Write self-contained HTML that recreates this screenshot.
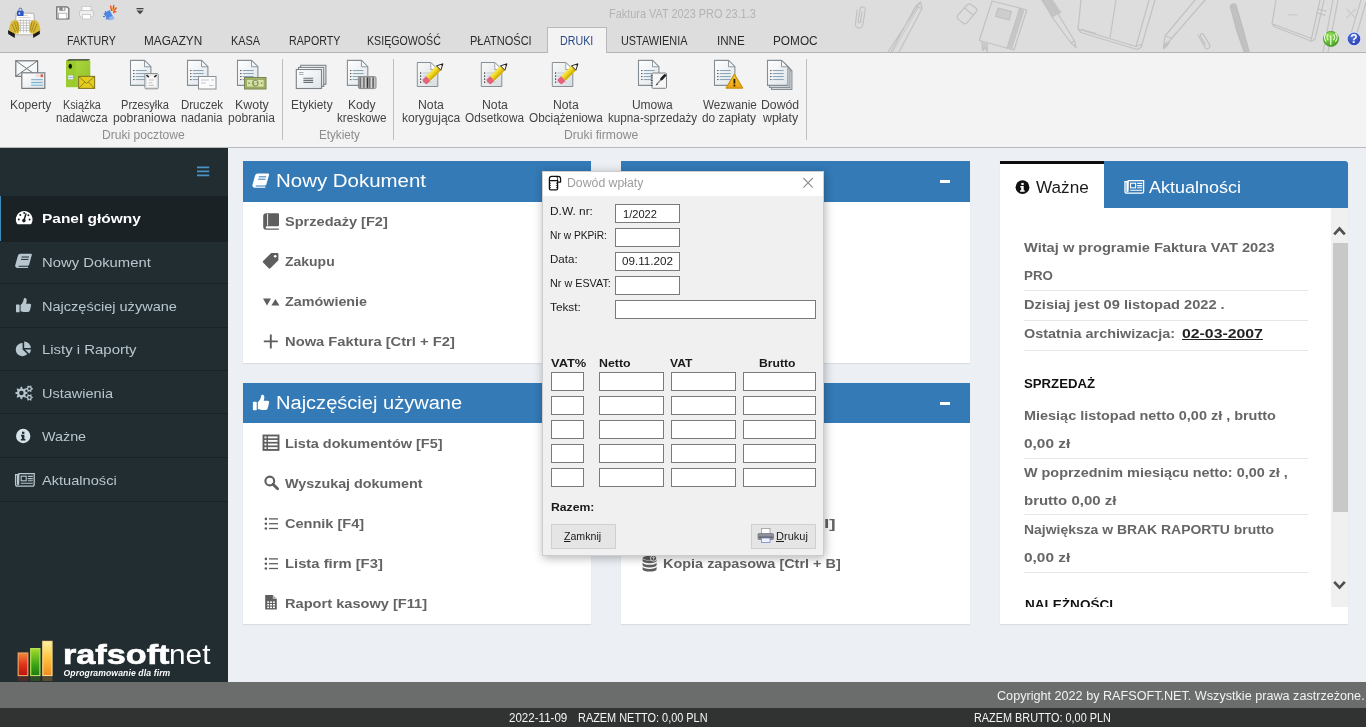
<!DOCTYPE html>
<html lang="pl"><head><meta charset="utf-8"><title>Faktura VAT 2023 PRO 23.1.3</title>
<style>
*{box-sizing:border-box;margin:0;padding:0}
html,body{width:1366px;height:727px;overflow:hidden;background:#ecf0f5;font-family:"Liberation Sans",sans-serif}
#w{position:absolute;left:0;top:0;width:1366px;height:727px;will-change:transform}
.a{position:absolute}
.t{position:absolute;white-space:nowrap;line-height:1;transform-origin:0 0}
svg.ov{position:absolute;left:0;top:0;width:1366px;height:727px;pointer-events:none}
.inp{position:absolute;background:#fff;border:1px solid #7a7a7a;height:19px}
.btn{position:absolute;height:25px;background:#e5e5e5;border:1px solid #cfcfcf;top:524px}
.sep{position:absolute;left:0;width:228px;height:1px;background:#1a2226}
.rsp{position:absolute;left:1024px;width:284px;height:1px;background:#e6e6e6}
.rs{position:absolute;top:58.5px;width:1px;height:81.5px;background:#bebebe}
</style></head>
<body><div id="w">
<div class="a" style="left:0;top:0;width:1366px;height:53px;background:#dddddd"></div><svg class="ov" viewBox="0 0 1366 727"><g fill="none" stroke="#c2c2c2" stroke-width="1.2" stroke-linecap="round" stroke-linejoin="round"><path d="M857,10 l-1.5,14 a3.6,3.6 0 0 0 7.2,1 l2.6,-15 a2.6,2.6 0 0 0 -5.2,-0.8 l-2,12 a1.2,1.2 0 0 0 2.4,0.4 l1.6,-9.5"/><path d="M920.5,2 l-32.5,50 M920.5,2 l1.5,6.5 l-23,43.5 M920.5,2 l-5,4.5 l-24.5,45.5 M915.5,6.5 l6.5,2"/><path d="M918.6,7 l-26,45" stroke-width="0.8"/><path d="M958,15 l9,-10 a3,3 0 0 1 4,-0.6 l4.5,3.4 a3,3 0 0 1 0.6,4.2 l-9,10.6 a3,3 0 0 1 -4.2,0.4 l-4.5,-3.6 a3,3 0 0 1 -0.4,-4.4z M964.5,8 l8.6,7"/><path d="M992,1 l34.8,9 l-12.8,40 l-34.700,-9.5z"/><path d="M1019.800,8.200 l5,1.3 l-12.8,40 l-5,-1.4z" fill="#c6c6c6" stroke="none"/><path d="M1019.800,8.200 l-12.800,39.9"/><path d="M998,8 l13.500,3.600 l-2.400,8.400 l-13.500,-3.600z" fill="#cdcdcd"/><path d="M982,42 l0.500,8.500 l2.500,-3 l2.300,4 l-0.300,-8.200" fill="#cacaca"/><path d="M1041,0 l12,0 l8,12 l-9,5z" fill="#c4c4c4" stroke="none"/><path d="M1043,0 l9,17 l19,26 l5,4.500 l-1.500,-6.500 l-17,-28 l-9,-13 M1052,17 l9,-5 M1071,43 l3.500,-2.200"/><path d="M1081,0 l-3,29 l3,3.500 l56,17 l4,-2 l14,-47.500 M1078,29 l58,17.500 l5,-2 M1136,46.500 l13,-46.500 M1116,0 l-6,37.500 M1096,33.500 l-14,-4"/><path d="M1205,0 l-33,38 l-8.500,10.500 l1.500,-12.500 l30,-36 M1165,36 l7,2 M1166.500,42 l3,1.500"/><path d="M1164.500,43 l-1,5.500 l4.500,-3.500z" fill="#c4c4c4"/><path d="M1198,35 l7,12.500 a2.600,2.600 0 0 0 4.600,-2.400 l-6,-10.500 a1.700,1.700 0 0 0 -3,1.600 l4.600,8.400"/><path d="M1230.500,7 a3,3 0 0 1 5.600,-1.600 l7,24 l6,22.600 l-5,0 l-7.500,-22z" fill="#c1c1c1" stroke="#bdbdbd"/><path d="M1243.500,30 l-6,1.500"/><path d="M1276,0 l-4,23.700 l2.500,3 l37,14.500 l3.500,-2 l9,-39.200 M1272,23.700 l39.500,14.800 l8.500,-38.500 M1311.500,38.500 l-1,2.500"/><path d="M1333,0 l-10,52 M1338,0 l-10,52 M1361,0 l-10,33.600 M1366,2 l-11,38"/><path d="M1318,9 l8,2.200 M1317,13 l8,2.200"/></g></svg><div class="a" style="left:0;top:52px;width:1366px;height:1px;background:#b4b4b4"></div><div class="a" style="left:0;top:53px;width:1366px;height:94px;background:#f3f3f3"></div><div class="a" style="left:0;top:147px;width:1366px;height:1px;background:#b9b9b9"></div><div class="a" style="left:547px;top:27px;width:60px;height:26px;background:#f3f3f3;border:1px solid #b9b9b9;border-bottom:none"></div><div class="rs" style="left:282px"></div><div class="rs" style="left:393px"></div><div class="rs" style="left:806px"></div><div class="a" style="left:0;top:148px;width:228px;height:534px;background:#222d32"></div><div class="a" style="left:0;top:196px;width:228px;height:45px;background:#1a2226;border-left:1px solid #3c8dbc"></div><div class="sep" style="top:241px"></div><div class="sep" style="top:283px"></div><div class="sep" style="top:327px"></div><div class="sep" style="top:370px"></div><div class="sep" style="top:413px"></div><div class="sep" style="top:457px"></div><div class="sep" style="top:501px"></div><div class="a" style="left:243px;top:161px;width:348px;height:202px;background:#fff;box-shadow:0 1px 1px rgba(0,0,0,.07)"></div><div class="a" style="left:243px;top:161px;width:348px;height:40.5px;background:#337ab7"></div><div class="a" style="left:621px;top:161px;width:349px;height:202px;background:#fff;box-shadow:0 1px 1px rgba(0,0,0,.07)"></div><div class="a" style="left:621px;top:161px;width:349px;height:40.5px;background:#337ab7"></div><div class="a" style="left:243px;top:383px;width:348px;height:241px;background:#fff;box-shadow:0 1px 1px rgba(0,0,0,.07)"></div><div class="a" style="left:243px;top:383px;width:348px;height:39.5px;background:#337ab7"></div><div class="a" style="left:621px;top:383px;width:349px;height:241px;background:#fff;box-shadow:0 1px 1px rgba(0,0,0,.07)"></div><div class="a" style="left:621px;top:383px;width:349px;height:39.5px;background:#337ab7"></div><div class="a" style="left:940px;top:180px;width:10px;height:3px;background:#fff"></div><div class="a" style="left:940px;top:402px;width:10px;height:3px;background:#fff"></div><div class="a" style="left:1000px;top:161px;width:348px;height:463px;background:#fff;box-shadow:0 1px 1px rgba(0,0,0,.07)"></div><div class="a" style="left:1000px;top:161px;width:348px;height:46.5px;background:#337ab7;border-radius:0 3px 0 0"></div><div class="a" style="left:1000px;top:161px;width:104px;height:46.5px;background:#fff;border-top:3px solid #0c0c0c"></div><div class="a" style="left:1331px;top:208px;width:17px;height:399px;background:#f0f0f0"></div><div class="a" style="left:1332.5px;top:243px;width:15px;height:269px;background:#c8c8c8"></div><div class="rsp" style="top:290px"></div><div class="rsp" style="top:320px"></div><div class="rsp" style="top:349.5px"></div><div class="rsp" style="top:457.5px"></div><div class="rsp" style="top:514px"></div><div class="rsp" style="top:571.5px"></div><div class="a" style="left:0;top:682px;width:1366px;height:26px;background:#6b6d6c"></div><div class="a" style="left:0;top:708px;width:1366px;height:19px;background:#313333"></div>
<svg class="ov" viewBox="0 0 1366 727"><defs>
<linearGradient id="gdoc" x1="0" y1="0" x2="1" y2="1"><stop offset="0" stop-color="#ffffff"/><stop offset="1" stop-color="#dfe5ea"/></linearGradient>
<linearGradient id="gdoc2" x1="0" y1="0" x2="1" y2="1"><stop offset="0" stop-color="#fafafa"/><stop offset="1" stop-color="#d5dde0"/></linearGradient>
<radialGradient id="ggreen" cx="0.4" cy="0.3" r="0.8"><stop offset="0" stop-color="#9be05a"/><stop offset="1" stop-color="#3c9a1c"/></radialGradient>
<radialGradient id="gblue" cx="0.4" cy="0.3" r="0.8"><stop offset="0" stop-color="#5a78e0"/><stop offset="1" stop-color="#1f35a8"/></radialGradient>
<linearGradient id="gred" x1="0" y1="0" x2="0" y2="1"><stop offset="0" stop-color="#f08a3c"/><stop offset="0.5" stop-color="#e0341c"/><stop offset="1" stop-color="#b81410"/></linearGradient>
<linearGradient id="ggr" x1="0" y1="0" x2="0" y2="1"><stop offset="0" stop-color="#a6dc28"/><stop offset="0.6" stop-color="#3aa514"/><stop offset="1" stop-color="#1d7a10"/></linearGradient>
<linearGradient id="gyel" x1="0" y1="0" x2="0" y2="1"><stop offset="0" stop-color="#fff0a0"/><stop offset="0.5" stop-color="#fcc23c"/><stop offset="1" stop-color="#f08c1c"/></linearGradient>
<linearGradient id="gwarn" x1="0" y1="0" x2="0" y2="1"><stop offset="0" stop-color="#fbd23a"/><stop offset="1" stop-color="#eda010"/></linearGradient>
<linearGradient id="gbox" x1="0" y1="0" x2="1" y2="1"><stop offset="0" stop-color="#a9d83c"/><stop offset="1" stop-color="#8fbe2a"/></linearGradient>
</defs><g><path d="M16.2,13.2 h17.600 l1.600,21.600 h-20.600z" fill="#fbfbfb" stroke="#a3a3a3" stroke-width="0.8"/><path d="M18.500,15.500 h9 M18.500,17.500 h12" stroke="#c9c9c9" stroke-width="0.8"/><path d="M17.500,20.500 h15.500 M17.300,23 h16 M17.100,25.500 h16.500 M16.900,28 h17 M16.700,30.500 h17.400 M20.500,19.500 v13 M23.500,19.500 v13 M26.500,19.500 v13 M29.500,19.500 v13" stroke="#bcbcbc" stroke-width="0.8"/><rect x="17" y="10.800" width="6.600" height="5.200" rx="0.8" fill="#2b55c4"/><path d="M19,10.800 v-1.300 a1.400,1.400 0 0 1 2.800,0 v1.300" fill="none" stroke="#3a5fc0" stroke-width="0.9"/><rect x="18.600" y="12.400" width="1.600" height="2" fill="#dfe8ff"/><path d="M8,30 l6.800,3.400 v4.600 l-6.600,-4z" fill="#1b1b1b"/><path d="M39.800,30 l-6.600,3.400 v4.600 l6.600,-4z" fill="#1b1b1b"/><path d="M10.200,24.500 c0.500,-3 3,-4.500 5,-4.500 c2,0 3.500,2 4,4.500 c0.500,3 0.500,6 -0.500,9 l-3.800,0.300 l-6.200,-3.600 c0.200,-2 0.800,-4 1.500,-5.700z" fill="#d9b834"/><path d="M39,24.500 c-0.500,-3 -3,-4.500 -5,-4.500 c-2,0 -3.500,2 -4,4.500 c-0.500,3 -0.500,6 0.500,9 l3.800,0.300 l6.200,-3.600 c-0.200,-2 -0.800,-4 -1.500,-5.700z" fill="#d9b834"/><path d="M12,24 l3.500,8 M14.500,22 l3,9.500 M17,21.500 l1.800,9" stroke="#8d7818" stroke-width="0.7"/><path d="M37,24 l-3.500,8 M34.500,22 l-3,9.500 M32,21.500 l-1.800,9" stroke="#8d7818" stroke-width="0.7"/></g><path d="M56.800,6.800 h10.200 l1.800,1.800 v10.200 h-12z" fill="#f7f7f7" stroke="#6f6f6f" stroke-width="1.3"/><rect x="59.200" y="7" width="6.200" height="3.800" fill="#8a8a8a"/><rect x="62.800" y="7.600" width="1.600" height="2.600" fill="#f0f0f0"/><rect x="58.600" y="13.200" width="8.200" height="5.600" fill="#fff" stroke="#9c9c9c" stroke-width="0.7"/><rect x="82" y="6.5" width="9" height="5" fill="#fcfcfc" stroke="#c6c6c6" stroke-width="0.8"/><rect x="79.5" y="10.5" width="14" height="6.5" rx="1.5" fill="#efefef" stroke="#c2c2c2" stroke-width="0.8"/><rect x="82.5" y="14.5" width="8" height="4.5" fill="#fff" stroke="#c6c6c6" stroke-width="0.8"/><g><path d="M103.500,13.500 l6,-3.500 l3.500,6.500 l-5,3.500z" fill="#4f86e0"/><path d="M108.500,17.500 l4.500,-2 l1.500,3.500 l-5,1.500z" fill="#8fb2ee"/><path d="M105,11 l1.500,2 M103,16.500 l2,0.300 M106,19.500 l1,-1.500" stroke="#3b6fd0" stroke-width="1"/><path d="M110.500,5.500 l1.200,5.500 M113.800,4.800 l-0.800,6 M116.500,7.500 l-3,4 M116.500,11.500 l-3.500,1.200" stroke="#e8502a" stroke-width="1.300"/><path d="M112,6.500 l0.800,4.500 M115,7 l-1.800,4" stroke="#f2a03a" stroke-width="0.9"/></g><rect x="136.5" y="8" width="7" height="1.3" fill="#444"/><path d="M136.5,10.6 h7 l-3.5,3.6z" fill="#444"/><circle cx="1331" cy="38.900" r="7.600" fill="url(#ggreen)" stroke="#3f8f1f" stroke-width="0.6"/><path d="M1330.800,35.500 v9.500 M1328.200,34.500 a4,4 0 0 0 0,5.600 M1333.400,34.500 a4,4 0 0 1 0,5.600 M1326.200,33 a6.500,6.500 0 0 0 0,8.600 M1335.400,33 a6.500,6.500 0 0 1 0,8.600" stroke="#eaffd8" stroke-width="1.2" fill="none"/><circle cx="1354" cy="38.900" r="6.900" fill="url(#gblue)" stroke="#d8def5" stroke-width="1.2"/><text x="1354" y="43.200" font-family="Liberation Sans" font-weight="bold" font-size="12" fill="#fff" text-anchor="middle">?</text><path d="M1288,14.800 h9.600" stroke="#cbcbcb" stroke-width="1.2"/><path d="M1346.500,9 l9,9 M1355.500,9 l-9,9" stroke="#cbcbcb" stroke-width="1.1"/><rect x="15.800" y="60.800" width="21.800" height="15.500" fill="#f6f9f9" stroke="#707478" stroke-width="1.200"/><path d="M15.800,60.800 l21.800,15.500 M37.600,60.800 l-21.800,15.500" stroke="#707478" stroke-width="1"/><rect x="21.800" y="72.800" width="23" height="15.600" fill="url(#gdoc)" stroke="#767b80" stroke-width="1.200"/><rect x="40.600" y="74.300" width="2.300" height="2.800" fill="#d9573f"/><rect x="36" y="74.300" width="4" height="2.800" fill="#f3dede"/><path d="M31.200,79.700 h11.600 M31.200,82.400 h11.600 M31.200,85.200 h11.600" stroke="#7aa9c6" stroke-width="1"/><path d="M31.200,83.800 h9" stroke="#bfeef0" stroke-width="1.600"/><path d="M66,60.600 h10 v26.600 h-10z" fill="#9ccb2f"/><path d="M76,60.200 h14.300 v26 l-14.300,1z" fill="url(#gbox)"/><path d="M66,60.800 l3,-1.600 h21.300 l-2,1.200 h-12.300z" fill="#26330c"/><ellipse cx="70.300" cy="66.200" rx="1.700" ry="2.500" fill="#0d1404"/><rect x="67.800" y="75" width="5.600" height="4.800" fill="#e6f0fa" stroke="#86b03a" stroke-width="0.6"/><path d="M68.500,77.400 h4.200" stroke="#9ab8d8" stroke-width="1"/><rect x="78.600" y="76.400" width="16" height="12" fill="#e6cd1c" stroke="#857a26" stroke-width="1.100"/><path d="M78.600,76.400 l8,7 l8,-7 M78.600,88.400 l6.200,-6.400 M94.600,88.400 l-6.200,-6.400" fill="none" stroke="#857a26" stroke-width="0.9"/><path d="M130.5,60.4 h13.999999999999998 l6.4,6.4 v18.6 h-20.4 z" fill="url(#gdoc)" stroke="#868e95" stroke-width="1.1"/><path d="M144.5,60.4 v6.4 h6.4 z" fill="#f2f5f7" stroke="#868e95" stroke-width="0.9"/><rect x="133.3" y="70" width="1.1" height="1.1" fill="#2e2e2e"/><rect x="135.7" y="70.05" width="11.0" height="1" fill="#86a2b3"/><rect x="133.3" y="73" width="1.1" height="1.1" fill="#2e2e2e"/><rect x="135.7" y="73.05" width="11.0" height="1" fill="#86a2b3"/><rect x="133.3" y="76" width="1.1" height="1.1" fill="#2e2e2e"/><rect x="135.7" y="76.05" width="11.0" height="1" fill="#86a2b3"/><rect x="133.3" y="79" width="1.1" height="1.1" fill="#2e2e2e"/><rect x="135.7" y="79.05" width="11.0" height="1" fill="#86a2b3"/><rect x="144.900" y="73.600" width="13.300" height="15.200" rx="1" fill="#f8f8f8" stroke="#858a8f"/><rect x="146.200" y="75" width="10.700" height="12.400" fill="none" stroke="#d8d8d8" stroke-width="0.8"/><path d="M146.500,75.200 l2.400,2 M156.600,75.200 l-2.400,2" stroke="#2a2a2a" stroke-width="1.500"/><path d="M149,80 h5 M148.500,82.800 h4 M148.500,85.400 h5.500" stroke="#b4b4b4" stroke-width="0.8"/><path d="M187.5,60.4 h13.999999999999998 l6.4,6.4 v18.6 h-20.4 z" fill="url(#gdoc)" stroke="#868e95" stroke-width="1.1"/><path d="M201.5,60.4 v6.4 h6.4 z" fill="#f2f5f7" stroke="#868e95" stroke-width="0.9"/><rect x="190.3" y="70" width="1.1" height="1.1" fill="#2e2e2e"/><rect x="192.7" y="70.05" width="11.0" height="1" fill="#86a2b3"/><rect x="190.3" y="73" width="1.1" height="1.1" fill="#2e2e2e"/><rect x="192.7" y="73.05" width="11.0" height="1" fill="#86a2b3"/><rect x="190.3" y="76" width="1.1" height="1.1" fill="#2e2e2e"/><rect x="192.7" y="76.05" width="11.0" height="1" fill="#86a2b3"/><rect x="190.3" y="79" width="1.1" height="1.1" fill="#2e2e2e"/><rect x="192.7" y="79.05" width="11.0" height="1" fill="#86a2b3"/><rect x="198.5" y="76.5" width="17.5" height="12.5" fill="#fbfbfb" stroke="#8a8f94"/><path d="M201,80 h8 M201,83 h5 M209,85.5 h4.5 M211,80 h3" stroke="#b7c3cc" stroke-width="0.9"/><path d="M237.5,60.4 h13.999999999999998 l6.4,6.4 v18.6 h-20.4 z" fill="url(#gdoc)" stroke="#868e95" stroke-width="1.1"/><path d="M251.49999999999997,60.4 v6.4 h6.4 z" fill="#f2f5f7" stroke="#868e95" stroke-width="0.9"/><rect x="240.3" y="70" width="1.1" height="1.1" fill="#2e2e2e"/><rect x="242.7" y="70.05" width="11.0" height="1" fill="#86a2b3"/><rect x="240.3" y="73" width="1.1" height="1.1" fill="#2e2e2e"/><rect x="242.7" y="73.05" width="11.0" height="1" fill="#86a2b3"/><rect x="240.3" y="76" width="1.1" height="1.1" fill="#2e2e2e"/><rect x="242.7" y="76.05" width="11.0" height="1" fill="#86a2b3"/><rect x="240.3" y="79" width="1.1" height="1.1" fill="#2e2e2e"/><rect x="242.7" y="79.05" width="11.0" height="1" fill="#86a2b3"/><rect x="244.5" y="77.5" width="21.5" height="11.5" fill="#a4b36a" stroke="#76864a"/><rect x="246.5" y="79.5" width="17.5" height="7.5" fill="#d9e2a6" stroke="#8a9a58" stroke-width="0.6"/><circle cx="255.3" cy="83.2" r="3" fill="#9aab5e" stroke="#6f8044" stroke-width="0.6"/><circle cx="249" cy="83.200" r="0.9" fill="#8a9a58"/><circle cx="261.600" cy="83.200" r="0.9" fill="#8a9a58"/><text x="255.3" y="85.4" font-size="6" font-family="Liberation Sans" font-weight="bold" fill="#eaf4d6" text-anchor="middle">$</text><rect x="300.7" y="65.3" width="25.200" height="19" fill="url(#gdoc)" stroke="#7c8288" stroke-width="1.100"/><rect x="298.5" y="67.4" width="25.200" height="19" fill="url(#gdoc)" stroke="#7c8288" stroke-width="1.100"/><rect x="296.3" y="69.5" width="25.200" height="19" fill="url(#gdoc)" stroke="#7c8288" stroke-width="1.100"/><path d="M299,72.500 h4.500 M299,74.400 h4.500" stroke="#9aa4ac" stroke-width="0.9"/><path d="M303.400,78.300 h9.800 M303.400,80.400 h9.800 M303.400,82.400 h9.800" stroke="#6c7378" stroke-width="1.100"/><path d="M347.4,60.4 h13.999999999999998 l6.4,6.4 v18.6 h-20.4 z" fill="url(#gdoc)" stroke="#868e95" stroke-width="1.1"/><path d="M361.4,60.4 v6.4 h6.4 z" fill="#f2f5f7" stroke="#868e95" stroke-width="0.9"/><rect x="350.2" y="70" width="1.1" height="1.1" fill="#2e2e2e"/><rect x="352.59999999999997" y="70.05" width="11.0" height="1" fill="#86a2b3"/><rect x="350.2" y="73" width="1.1" height="1.1" fill="#2e2e2e"/><rect x="352.59999999999997" y="73.05" width="11.0" height="1" fill="#86a2b3"/><rect x="350.2" y="76" width="1.1" height="1.1" fill="#2e2e2e"/><rect x="352.59999999999997" y="76.05" width="11.0" height="1" fill="#86a2b3"/><rect x="350.2" y="79" width="1.1" height="1.1" fill="#2e2e2e"/><rect x="352.59999999999997" y="79.05" width="11.0" height="1" fill="#86a2b3"/><rect x="358.400" y="76.600" width="17.600" height="12" rx="1.500" fill="#adadad" stroke="#8a8a8a"/><rect x="359.6" y="77.400" width="1.3" height="10.400" fill="#6b6b6b"/><rect x="361.7" y="77.400" width="0.8" height="10.400" fill="#e2e2e2"/><rect x="363" y="77.400" width="1.7" height="10.400" fill="#7a7a7a"/><rect x="365.4" y="77.400" width="0.8" height="10.400" fill="#e2e2e2"/><rect x="366.8" y="77.400" width="1" height="10.400" fill="#1c1c1c"/><rect x="368.5" y="77.400" width="1.7" height="10.400" fill="#7a7a7a"/><rect x="371" y="77.400" width="0.8" height="10.400" fill="#e2e2e2"/><rect x="372.4" y="77.400" width="1.6" height="10.400" fill="#6b6b6b"/><rect x="374.5" y="77.400" width="0.7" height="10.400" fill="#dcdcdc"/><path d="M417.3,62.5 h13.5 l7,7 v17 h-20.5z" fill="url(#gdoc2)" stroke="#878f96"/><path d="M430.8,62.5 v7 h7z" fill="#fff" stroke="#878f96" stroke-width="0.8"/><rect x="420" y="72.5" width="1.2" height="1.2" fill="#222"/><rect x="422.4" y="72.6" width="9" height="0.9" fill="#b3c3cc"/><rect x="420" y="75.5" width="1.2" height="1.2" fill="#222"/><rect x="422.4" y="75.6" width="9" height="0.9" fill="#b3c3cc"/><rect x="420" y="78.5" width="1.2" height="1.2" fill="#222"/><rect x="422.4" y="78.6" width="9" height="0.9" fill="#b3c3cc"/><rect x="420" y="81.5" width="1.2" height="1.2" fill="#222"/><rect x="422.4" y="81.6" width="9" height="0.9" fill="#b3c3cc"/><g transform="translate(425.6,81.1) rotate(-45)"><rect x="-2" y="-3.1" width="6" height="6.2" rx="1.4" fill="#e8607a"/><rect x="4" y="-3.1" width="14.500" height="6.2" fill="#ecd21a"/><rect x="4" y="-3.1" width="14.500" height="2" fill="#f5e34e"/><rect x="4" y="1.1" width="14.500" height="2" fill="#d4b20c"/><path d="M18.500,-3.1 l6,3.1 l-6,3.1z" fill="#fbf6ea" stroke="#222" stroke-width="0.9"/><path d="M22.400,-1.1 l2.100,1.100 l-2.100,1.100z" fill="#111"/></g><path d="M481.3,62.5 h13.5 l7,7 v17 h-20.5z" fill="url(#gdoc2)" stroke="#878f96"/><path d="M494.8,62.5 v7 h7z" fill="#fff" stroke="#878f96" stroke-width="0.8"/><rect x="484" y="72.5" width="1.2" height="1.2" fill="#222"/><rect x="486.4" y="72.6" width="9" height="0.9" fill="#b3c3cc"/><rect x="484" y="75.5" width="1.2" height="1.2" fill="#222"/><rect x="486.4" y="75.6" width="9" height="0.9" fill="#b3c3cc"/><rect x="484" y="78.5" width="1.2" height="1.2" fill="#222"/><rect x="486.4" y="78.6" width="9" height="0.9" fill="#b3c3cc"/><rect x="484" y="81.5" width="1.2" height="1.2" fill="#222"/><rect x="486.4" y="81.6" width="9" height="0.9" fill="#b3c3cc"/><g transform="translate(489.6,81.1) rotate(-45)"><rect x="-2" y="-3.1" width="6" height="6.2" rx="1.4" fill="#e8607a"/><rect x="4" y="-3.1" width="14.500" height="6.2" fill="#ecd21a"/><rect x="4" y="-3.1" width="14.500" height="2" fill="#f5e34e"/><rect x="4" y="1.1" width="14.500" height="2" fill="#d4b20c"/><path d="M18.500,-3.1 l6,3.1 l-6,3.1z" fill="#fbf6ea" stroke="#222" stroke-width="0.9"/><path d="M22.400,-1.1 l2.100,1.100 l-2.100,1.100z" fill="#111"/></g><path d="M552.3,62.5 h13.5 l7,7 v17 h-20.5z" fill="url(#gdoc2)" stroke="#878f96"/><path d="M565.8,62.5 v7 h7z" fill="#fff" stroke="#878f96" stroke-width="0.8"/><rect x="555" y="72.5" width="1.2" height="1.2" fill="#222"/><rect x="557.4" y="72.6" width="9" height="0.9" fill="#b3c3cc"/><rect x="555" y="75.5" width="1.2" height="1.2" fill="#222"/><rect x="557.4" y="75.6" width="9" height="0.9" fill="#b3c3cc"/><rect x="555" y="78.5" width="1.2" height="1.2" fill="#222"/><rect x="557.4" y="78.6" width="9" height="0.9" fill="#b3c3cc"/><rect x="555" y="81.5" width="1.2" height="1.2" fill="#222"/><rect x="557.4" y="81.6" width="9" height="0.9" fill="#b3c3cc"/><g transform="translate(560.6,81.1) rotate(-45)"><rect x="-2" y="-3.1" width="6" height="6.2" rx="1.4" fill="#e8607a"/><rect x="4" y="-3.1" width="14.500" height="6.2" fill="#ecd21a"/><rect x="4" y="-3.1" width="14.500" height="2" fill="#f5e34e"/><rect x="4" y="1.1" width="14.500" height="2" fill="#d4b20c"/><path d="M18.500,-3.1 l6,3.1 l-6,3.1z" fill="#fbf6ea" stroke="#222" stroke-width="0.9"/><path d="M22.400,-1.1 l2.100,1.100 l-2.100,1.100z" fill="#111"/></g><path d="M638.5,60.4 h13.999999999999998 l6.4,6.4 v18.6 h-20.4 z" fill="url(#gdoc)" stroke="#868e95" stroke-width="1.1"/><path d="M652.5,60.4 v6.4 h6.4 z" fill="#f2f5f7" stroke="#868e95" stroke-width="0.9"/><rect x="641.3" y="70" width="1.1" height="1.1" fill="#2e2e2e"/><rect x="643.7" y="70.05" width="11.0" height="1" fill="#86a2b3"/><rect x="641.3" y="73" width="1.1" height="1.1" fill="#2e2e2e"/><rect x="643.7" y="73.05" width="11.0" height="1" fill="#86a2b3"/><rect x="641.3" y="76" width="1.1" height="1.1" fill="#2e2e2e"/><rect x="643.7" y="76.05" width="11.0" height="1" fill="#86a2b3"/><rect x="641.3" y="79" width="1.1" height="1.1" fill="#2e2e2e"/><rect x="643.7" y="79.05" width="11.0" height="1" fill="#86a2b3"/><rect x="652" y="73" width="14.500" height="15.300" rx="1" fill="#f6f6f6" stroke="#7e8388"/><path d="M652.600,75.500 h-1.800 M652.600,78 h-1.800 M652.600,80.500 h-1.800 M652.600,83 h-1.800 M652.600,85.500 h-1.800" stroke="#4f5357" stroke-width="1"/><path d="M656.500,84.500 l5.500,-6" stroke="#8a8a8a" stroke-width="1.300"/><path d="M661.500,79 l3.400,-3.600" stroke="#1d1d1d" stroke-width="2.600" stroke-linecap="round"/><path d="M655.500,85.800 l1.600,-2.200 l0.800,0.800z" fill="#222"/><path d="M714.5,60.4 h13.999999999999998 l6.4,6.4 v18.6 h-20.4 z" fill="url(#gdoc)" stroke="#868e95" stroke-width="1.1"/><path d="M728.5,60.4 v6.4 h6.4 z" fill="#f2f5f7" stroke="#868e95" stroke-width="0.9"/><rect x="717.3" y="70" width="1.1" height="1.1" fill="#2e2e2e"/><rect x="719.7" y="70.05" width="11.0" height="1" fill="#86a2b3"/><rect x="717.3" y="73" width="1.1" height="1.1" fill="#2e2e2e"/><rect x="719.7" y="73.05" width="11.0" height="1" fill="#86a2b3"/><rect x="717.3" y="76" width="1.1" height="1.1" fill="#2e2e2e"/><rect x="719.7" y="76.05" width="11.0" height="1" fill="#86a2b3"/><rect x="717.3" y="79" width="1.1" height="1.1" fill="#2e2e2e"/><rect x="719.7" y="79.05" width="11.0" height="1" fill="#86a2b3"/><path d="M734.400,74.300 l8.300,13.800 h-16.600z" fill="url(#gwarn)" stroke="#c9900a" stroke-width="1.1" stroke-linejoin="round"/><rect x="733.500" y="78.800" width="1.800" height="4.800" fill="#2a1c00"/><rect x="733.500" y="84.600" width="1.800" height="1.800" fill="#2a1c00"/><path d="M771.5,64.4 h13.999999999999998 l6.4,6.4 v18.6 h-20.4 z" fill="url(#gdoc)" stroke="#868e95" stroke-width="1.1"/><path d="M785.5,64.4 v6.4 h6.4 z" fill="#f2f5f7" stroke="#868e95" stroke-width="0.9"/><path d="M769.5,62.4 h13.999999999999998 l6.4,6.4 v18.6 h-20.4 z" fill="url(#gdoc)" stroke="#868e95" stroke-width="1.1"/><path d="M783.5,62.4 v6.4 h6.4 z" fill="#f2f5f7" stroke="#868e95" stroke-width="0.9"/><path d="M767.5,60.4 h13.999999999999998 l6.4,6.4 v18.6 h-20.4 z" fill="url(#gdoc)" stroke="#868e95" stroke-width="1.1"/><path d="M781.5,60.4 v6.4 h6.4 z" fill="#f2f5f7" stroke="#868e95" stroke-width="0.9"/><rect x="770.3" y="70" width="1.1" height="1.1" fill="#2e2e2e"/><rect x="772.7" y="70.05" width="11.0" height="1" fill="#86a2b3"/><rect x="770.3" y="73" width="1.1" height="1.1" fill="#2e2e2e"/><rect x="772.7" y="73.05" width="11.0" height="1" fill="#86a2b3"/><rect x="770.3" y="76" width="1.1" height="1.1" fill="#2e2e2e"/><rect x="772.7" y="76.05" width="11.0" height="1" fill="#86a2b3"/><rect x="770.3" y="79" width="1.1" height="1.1" fill="#2e2e2e"/><rect x="772.7" y="79.05" width="11.0" height="1" fill="#86a2b3"/><path d="M197,167.300 h12.200 M197,171.300 h12.200 M197,175.300 h12.200" stroke="#4a94c4" stroke-width="1.8"/><path d="M17.0,223.79999999999998 a8.4,8.4 0 1 1 14.4,0 a1,1 0 0 1 -0.8,0.4 h-12.8 a1,1 0 0 1 -0.8,-0.4z" fill="#fff"/><path d="M25.9,214.0 l-1.7,5.4" stroke="#1a2226" stroke-width="1.5" stroke-linecap="round"/><circle cx="23.9" cy="220.6" r="1.8" fill="#1a2226"/><circle cx="18.799999999999997" cy="219.39999999999998" r="1.0" fill="#1a2226"/><circle cx="20.3" cy="215.0" r="1.0" fill="#1a2226"/><circle cx="24.2" cy="212.89999999999998" r="1.0" fill="#1a2226"/><circle cx="28.4" cy="215.2" r="1.0" fill="#1a2226"/><circle cx="29.6" cy="219.39999999999998" r="1.0" fill="#1a2226"/><path d="M19.8,253.8 h11 a1,1 0 0 1 1,1.3 l-2.6,9.4 a1.6,1.6 0 0 1 -1.5,1.2 h-9.2 a2.6,2.6 0 0 1 0,1.1 h9.6 v1.2 h-10.6 a2.3,2.3 0 0 1 -2.2,-3 l2.5,-9 a3,3 0 0 1 3,-2.2z" fill="#b8c7ce"/><path d="M21.6,257.0 h7.4 M21.0,259.40000000000003 h7.4" stroke="#222d32" stroke-width="1"/><g transform="translate(16,298.1) scale(1.0,1.03)"><rect x="0" y="6.2" width="3.6" height="7.6" rx="0.6" fill="#b8c7ce"/><path d="M4.6,6.6 c1.6,-1 2.6,-3 3,-5 c0.2,-1.2 0.6,-1.8 1.6,-1.6 c1.4,0.3 1.7,1.8 1.4,3.2 l-0.5,2.2 h3.6 c1,0 1.6,0.8 1.5,1.6 c-0.1,0.6 -0.3,0.9 -0.6,1.1 c0.3,0.5 0.3,1.2 -0.3,1.8 c0.2,0.6 0,1.2 -0.5,1.7 c0.1,1.2 -0.7,1.9 -1.9,1.9 h-3.2 c-1.6,0 -2.8,-0.6 -4.1,-0.8z" fill="#b8c7ce"/></g><path d="M22.6,343.0 v6.5 l4.7,4.5 a6.6,6.6 0 1 1 -4.7,-11z" fill="#b8c7ce"/><path d="M24.2,341.6 a6.6,6.6 0 0 1 6.6,6.500 h-6.6z" fill="#b8c7ce"/><path d="M25.0,349.6 h6 a6.6,6.6 0 0 1 -1.8,4.100z" fill="#b8c7ce"/><polygon points="27.57,392.39 27.57,393.61 25.55,394.26 25.23,395.05 26.19,396.93 25.33,397.79 23.45,396.83 22.66,397.15 22.01,399.17 20.79,399.17 20.14,397.15 19.35,396.83 17.47,397.79 16.61,396.93 17.57,395.05 17.25,394.26 15.23,393.61 15.23,392.39 17.25,391.74 17.57,390.95 16.61,389.07 17.47,388.21 19.35,389.17 20.14,388.85 20.79,386.83 22.01,386.83 22.66,388.85 23.45,389.17 25.33,388.21 26.19,389.07 25.23,390.95 25.55,391.74" fill="#b8c7ce"/><circle cx="21.4" cy="393.0" r="2.23" fill="#222d32"/><polygon points="32.87,388.34 32.87,389.26 31.66,389.74 31.34,390.29 31.53,391.58 30.74,392.03 29.72,391.23 29.08,391.23 28.06,392.03 27.27,391.58 27.46,390.29 27.14,389.74 25.93,389.26 25.93,388.34 27.14,387.86 27.46,387.31 27.27,386.02 28.06,385.57 29.08,386.37 29.72,386.37 30.74,385.57 31.53,386.02 31.34,387.31 31.66,387.86" fill="#b8c7ce"/><circle cx="29.4" cy="388.79999999999995" r="1.26" fill="#222d32"/><polygon points="32.87,396.94 32.87,397.86 31.66,398.34 31.34,398.89 31.53,400.18 30.74,400.63 29.72,399.83 29.08,399.83 28.06,400.63 27.27,400.18 27.46,398.89 27.14,398.34 25.93,397.86 25.93,396.94 27.14,396.46 27.46,395.91 27.27,394.62 28.06,394.17 29.08,394.97 29.72,394.97 30.74,394.17 31.53,394.62 31.34,395.91 31.66,396.46" fill="#b8c7ce"/><circle cx="29.4" cy="397.4" r="1.26" fill="#222d32"/><circle cx="23.2" cy="436" r="7.2" fill="#d7e3ea"/><rect x="22.0" y="431.7" width="2.4" height="2.2" fill="#222d32"/><path d="M21.0,434.8 h3.4 v4.2 h1 v1.6 h-4.6 v-1.6 h1.1 v-2.6 h-0.9z" fill="#222d32"/><path d="M18.8,473.6 h15.399999999999999 v11.0 a1.6,1.6 0 0 1 -1.6,1.6 h-14.999999999999998 a2,2 0 0 1 -2,-2 v-9.6 h2 v9.4 a0.5,0.5 0 0 0 1,0z" fill="none" stroke="#b8c7ce" stroke-width="1.3"/><rect x="21.200000000000003" y="476.20000000000005" width="5" height="4.6" fill="none" stroke="#b8c7ce" stroke-width="1.1"/><path d="M27.8,476.40000000000003 h5 M27.8,478.6 h5 M27.8,480.8 h5 M20.8,483.20000000000005 h12" stroke="#b8c7ce" stroke-width="1.1"/><path d="M257.0,173.6 h11 a1,1 0 0 1 1,1.3 l-2.6,9.4 a1.6,1.6 0 0 1 -1.5,1.2 h-9.2 a2.6,2.6 0 0 1 0,1.1 h9.6 v1.2 h-10.6 a2.3,2.3 0 0 1 -2.2,-3 l2.5,-9 a3,3 0 0 1 3,-2.2z" fill="#fff"/><path d="M258.8,176.79999999999998 h7.4 M258.2,179.2 h7.4" stroke="#337ab7" stroke-width="1"/><g transform="translate(252.9,394.8) scale(1.07,1.12)"><rect x="0" y="6.2" width="3.6" height="7.6" rx="0.6" fill="#fff"/><path d="M4.6,6.6 c1.6,-1 2.6,-3 3,-5 c0.2,-1.2 0.6,-1.8 1.6,-1.6 c1.4,0.3 1.7,1.8 1.4,3.2 l-0.5,2.2 h3.6 c1,0 1.6,0.8 1.5,1.6 c-0.1,0.6 -0.3,0.9 -0.6,1.1 c0.3,0.5 0.3,1.2 -0.3,1.8 c0.2,0.6 0,1.2 -0.5,1.7 c0.1,1.2 -0.7,1.9 -1.9,1.9 h-3.2 c-1.6,0 -2.8,-0.6 -4.1,-0.8z" fill="#fff"/></g><path d="M266.59999999999997,213.2 h11.4 a1,1 0 0 1 1,1 v11 a1,1 0 0 1 -1,1 h-11.6 a1.2,1.2 0 0 0 0,2.2 h12.4 v1.4 h-12.6 a3,3 0 0 1 -3,-3 v-10.6 a3,3 0 0 1 3,-3z" fill="#5e5e5e"/><path d="M267.59999999999997,213.79999999999998 v11.8" stroke="#fff" stroke-width="0.9"/><path d="M271.20000000000005,253 h6.2 a1,1 0 0 1 1,1 v6.2 l-8,8 a1.2,1.2 0 0 1 -1.7,0 l-5.6,-5.6 a1.2,1.2 0 0 1 0,-1.7z" fill="#5e5e5e"/><circle cx="275.20000000000005" cy="256.2" r="1.3" fill="#fff"/><path d="M263,298.6 h8 l-4,7z" fill="#5e5e5e"/><path d="M271.4,305.6 h8 l-4,-6.6z" fill="#5e5e5e"/><path d="M263.8,341.4 h14 M270.8,334.4 v14" stroke="#5e5e5e" stroke-width="1.9"/><rect x="263.5" y="435.5" width="15" height="14.4" fill="none" stroke="#5e5e5e" stroke-width="1.9"/><path d="M263.5,439.1 h15" stroke="#5e5e5e" stroke-width="1.7"/><path d="M263.5,442.7 h15" stroke="#5e5e5e" stroke-width="1.7"/><path d="M263.5,446.3 h15" stroke="#5e5e5e" stroke-width="1.7"/><path d="M267.20000000000005,435.5 v14.4" stroke="#5e5e5e" stroke-width="1.5"/><circle cx="269.8" cy="481.0" r="4.4" fill="none" stroke="#5e5e5e" stroke-width="2.1"/><path d="M273.0,484.2 l4.6,4.6" stroke="#5e5e5e" stroke-width="2.8" stroke-linecap="round"/><circle cx="265.90000000000003" cy="518.9" r="1.3" fill="#5e5e5e"/><path d="M269.0,518.9 h9" stroke="#5e5e5e" stroke-width="1.3"/><circle cx="265.90000000000003" cy="523.6999999999999" r="1.3" fill="#5e5e5e"/><path d="M269.0,523.6999999999999 h9" stroke="#5e5e5e" stroke-width="1.3"/><circle cx="265.90000000000003" cy="528.5" r="1.3" fill="#5e5e5e"/><path d="M269.0,528.5 h9" stroke="#5e5e5e" stroke-width="1.3"/><circle cx="265.90000000000003" cy="558.9" r="1.3" fill="#5e5e5e"/><path d="M269.0,558.9 h9" stroke="#5e5e5e" stroke-width="1.3"/><circle cx="265.90000000000003" cy="563.6999999999999" r="1.3" fill="#5e5e5e"/><path d="M269.0,563.6999999999999 h9" stroke="#5e5e5e" stroke-width="1.3"/><circle cx="265.90000000000003" cy="568.5" r="1.3" fill="#5e5e5e"/><path d="M269.0,568.5 h9" stroke="#5e5e5e" stroke-width="1.3"/><path d="M265.2,595 h7.6 l4,4 v10.6 h-11.6z" fill="#5e5e5e"/><path d="M272.8,595 v4 h4z" fill="#fff" opacity="0.55"/><rect x="267.2" y="601.4" width="1.9" height="1.5" fill="#fff"/><rect x="270.09999999999997" y="601.4" width="1.9" height="1.5" fill="#fff"/><rect x="273.0" y="601.4" width="1.9" height="1.5" fill="#fff"/><rect x="267.2" y="604.0" width="1.9" height="1.5" fill="#fff"/><rect x="270.09999999999997" y="604.0" width="1.9" height="1.5" fill="#fff"/><rect x="273.0" y="604.0" width="1.9" height="1.5" fill="#fff"/><rect x="267.2" y="606.6" width="1.9" height="1.5" fill="#fff"/><rect x="270.09999999999997" y="606.6" width="1.9" height="1.5" fill="#fff"/><rect x="273.0" y="606.6" width="1.9" height="1.5" fill="#fff"/><path d="M642.6,558.4 a7,2.2 0 0 0 14,0 v2.6 a7,2.2 0 0 1 -14,0z" fill="#5e5e5e"/><path d="M642.6,562.6 a7,2.2 0 0 0 14,0 v2.6 a7,2.2 0 0 1 -14,0z" fill="#5e5e5e"/><path d="M642.6,566.8 a7,2.2 0 0 0 14,0 v2.6 a7,2.2 0 0 1 -14,0z" fill="#5e5e5e"/><ellipse cx="649.6" cy="558.0" rx="7" ry="2.2" fill="#5e5e5e"/><circle cx="653.6" cy="558.1999999999999" r="3.3" fill="#fff"/><circle cx="653.6" cy="558.1999999999999" r="2.5" fill="#5e5e5e"/><path d="M653.6,559.5999999999999 v-2.8 M652.4,557.8 l1.2,-1.2 l1.2,1.2" stroke="#fff" stroke-width="0.8" fill="none"/><circle cx="1022.5" cy="187.2" r="6.9" fill="#111"/><rect x="1021.3" y="182.89999999999998" width="2.4" height="2.2" fill="#fff"/><path d="M1020.3,186.0 h3.4 v4.2 h1 v1.6 h-4.6 v-1.6 h1.1 v-2.6 h-0.9z" fill="#fff"/><path d="M1128.2,180.6 h15.399999999999999 v11.0 a1.6,1.6 0 0 1 -1.6,1.6 h-14.999999999999998 a2,2 0 0 1 -2,-2 v-9.6 h2 v9.4 a0.5,0.5 0 0 0 1,0z" fill="none" stroke="#fff" stroke-width="1.3"/><rect x="1130.6000000000001" y="183.2" width="5" height="4.6" fill="none" stroke="#fff" stroke-width="1.1"/><path d="M1137.2,183.4 h5 M1137.2,185.6 h5 M1137.2,187.79999999999998 h5 M1130.2,190.2 h12" stroke="#fff" stroke-width="1.1"/><path d="M1334.200,234.400 l5.300,-5.800 l5.300,5.800" fill="none" stroke="#505050" stroke-width="2.700"/><path d="M1334.200,581.800 l5.300,5.800 l5.300,-5.800" fill="none" stroke="#505050" stroke-width="2.700"/><rect x="18.2" y="653" width="9.6" height="22.6" fill="url(#gred)" stroke="#f0a060" stroke-width="1.2"/><rect x="30.7" y="648.6" width="9.2" height="27" fill="url(#ggr)" stroke="#b6e05a" stroke-width="1.2"/><rect x="42.8" y="641.4" width="9.2" height="34.2" fill="url(#gyel)" stroke="#ffd98a" stroke-width="1.2"/><rect x="17.6" y="677" width="10.6" height="4" fill="#7a2a1a" opacity="0.5"/><rect x="30.2" y="677" width="10" height="4" fill="#3a6a1a" opacity="0.5"/><rect x="42.4" y="677" width="10" height="4" fill="#8a6a2a" opacity="0.5"/></svg>
<div class="t" style="left:63.2px;top:640.2px;font-size:28.5px;font-weight:bold;color:#fff;-webkit-text-stroke:0.7px #fff;transform:scaleX(1.2)">rafsoft</div><div class="t" style="left:168.8px;top:640.2px;font-size:28.5px;color:#fff;transform:scaleX(1.045)">net</div><div class="t" style="left:63.5px;top:668.9px;font-size:8.6px;font-weight:bold;font-style:italic;color:#fff;letter-spacing:0.12px">Oprogramowanie dla firm</div><div class="t" style="left:609.0px;top:8.1px;font-size:12.5px;color:#b3b3b3;transform:scaleX(0.873)">Faktura VAT 2023 PRO 23.1.3</div>
<div class="t" style="left:66.6px;top:34.5px;font-size:12.5px;color:#2a2a2a;transform:scaleX(0.850)">FAKTURY</div>
<div class="t" style="left:143.8px;top:34.5px;font-size:12.5px;color:#2a2a2a;transform:scaleX(0.942)">MAGAZYN</div>
<div class="t" style="left:230.9px;top:34.5px;font-size:12.5px;color:#2a2a2a;transform:scaleX(0.872)">KASA</div>
<div class="t" style="left:288.6px;top:34.5px;font-size:12.5px;color:#2a2a2a;transform:scaleX(0.852)">RAPORTY</div>
<div class="t" style="left:367.3px;top:34.5px;font-size:12.5px;color:#2a2a2a;transform:scaleX(0.851)">KSIĘGOWOŚĆ</div>
<div class="t" style="left:469.6px;top:34.5px;font-size:12.5px;color:#2a2a2a;transform:scaleX(0.882)">PŁATNOŚCI</div>
<div class="t" style="left:621.4px;top:34.5px;font-size:12.5px;color:#2a2a2a;transform:scaleX(0.870)">USTAWIENIA</div>
<div class="t" style="left:716.7px;top:34.5px;font-size:12.5px;color:#2a2a2a;transform:scaleX(0.927)">INNE</div>
<div class="t" style="left:772.7px;top:34.5px;font-size:12.5px;color:#2a2a2a;transform:scaleX(0.944)">POMOC</div>
<div class="t" style="left:559.7px;top:34.5px;font-size:12.5px;color:#2b4a86;transform:scaleX(0.856)">DRUKI</div>
<div class="t" style="left:9.9px;top:98.7px;font-size:12px;color:#444">Koperty</div>
<div class="t" style="left:62.9px;top:98.7px;font-size:12px;color:#444;transform:scaleX(0.899)">Książka</div>
<div class="t" style="left:56.2px;top:111.5px;font-size:12px;color:#444;transform:scaleX(0.957)">nadawcza</div>
<div class="t" style="left:120.9px;top:98.7px;font-size:12px;color:#444;transform:scaleX(0.923)">Przesyłka</div>
<div class="t" style="left:113.1px;top:111.5px;font-size:12px;color:#444;transform:scaleX(1.015)">pobraniowa</div>
<div class="t" style="left:181.1px;top:98.7px;font-size:12px;color:#444;transform:scaleX(0.956)">Druczek</div>
<div class="t" style="left:181.1px;top:111.5px;font-size:12px;color:#444;transform:scaleX(0.974)">nadania</div>
<div class="t" style="left:234.6px;top:98.7px;font-size:12px;color:#444;transform:scaleX(1.034)">Kwoty</div>
<div class="t" style="left:227.9px;top:111.5px;font-size:12px;color:#444;transform:scaleX(1.006)">pobrania</div>
<div class="t" style="left:290.6px;top:98.7px;font-size:12px;color:#444;transform:scaleX(0.990)">Etykiety</div>
<div class="t" style="left:347.6px;top:98.7px;font-size:12px;color:#444;transform:scaleX(1.009)">Kody</div>
<div class="t" style="left:336.8px;top:111.5px;font-size:12px;color:#444;transform:scaleX(0.979)">kreskowe</div>
<div class="t" style="left:417.8px;top:98.7px;font-size:12px;color:#444;transform:scaleX(1.021)">Nota</div>
<div class="t" style="left:401.6px;top:111.5px;font-size:12px;color:#444;transform:scaleX(1.005)">korygująca</div>
<div class="t" style="left:481.8px;top:98.7px;font-size:12px;color:#444;transform:scaleX(1.021)">Nota</div>
<div class="t" style="left:465.1px;top:111.5px;font-size:12px;color:#444;transform:scaleX(0.983)">Odsetkowa</div>
<div class="t" style="left:553.0px;top:98.7px;font-size:12px;color:#444;transform:scaleX(1.017)">Nota</div>
<div class="t" style="left:529.1px;top:111.5px;font-size:12px;color:#444;transform:scaleX(0.980)">Obciążeniowa</div>
<div class="t" style="left:631.9px;top:98.7px;font-size:12px;color:#444">Umowa</div>
<div class="t" style="left:607.7px;top:111.5px;font-size:12px;color:#444;transform:scaleX(0.975)">kupna-sprzedaży</div>
<div class="t" style="left:702.5px;top:98.7px;font-size:12px;color:#444;transform:scaleX(0.976)">Wezwanie</div>
<div class="t" style="left:701.8px;top:111.5px;font-size:12px;color:#444;transform:scaleX(0.987)">do zapłaty</div>
<div class="t" style="left:761.0px;top:98.7px;font-size:12px;color:#444;transform:scaleX(1.020)">Dowód</div>
<div class="t" style="left:762.8px;top:111.5px;font-size:12px;color:#444;transform:scaleX(1.032)">wpłaty</div>
<div class="t" style="left:101.9px;top:128.7px;font-size:12px;color:#8c8c8c;transform:scaleX(1.008)">Druki pocztowe</div>
<div class="t" style="left:319.1px;top:128.7px;font-size:12px;color:#8c8c8c;transform:scaleX(0.973)">Etykiety</div>
<div class="t" style="left:564.2px;top:128.7px;font-size:12px;color:#8c8c8c;transform:scaleX(1.012)">Druki firmowe</div>
<div class="t" style="left:42.2px;top:212.4px;font-size:13px;color:#ffffff;font-weight:bold;transform:scaleX(1.189)">Panel główny</div>
<div class="t" style="left:42.2px;top:256.0px;font-size:13px;color:#b8c7ce;transform:scaleX(1.141)">Nowy Dokument</div>
<div class="t" style="left:42.2px;top:299.5px;font-size:13px;color:#b8c7ce;transform:scaleX(1.118)">Najczęściej używane</div>
<div class="t" style="left:42.2px;top:343.1px;font-size:13px;color:#b8c7ce;transform:scaleX(1.148)">Listy i Raporty</div>
<div class="t" style="left:42.2px;top:386.7px;font-size:13px;color:#b8c7ce;transform:scaleX(1.116)">Ustawienia</div>
<div class="t" style="left:42.2px;top:430.2px;font-size:13px;color:#b8c7ce;transform:scaleX(1.103)">Ważne</div>
<div class="t" style="left:42.2px;top:473.8px;font-size:13px;color:#b8c7ce;transform:scaleX(1.124)">Aktualności</div>
<div class="t" style="left:276.2px;top:171.6px;font-size:18px;color:#fff;transform:scaleX(1.136)">Nowy Dokument</div>
<div class="t" style="left:276.2px;top:393.8px;font-size:18px;color:#fff;transform:scaleX(1.114)">Najczęściej używane</div>
<div class="t" style="left:285.0px;top:215.3px;font-size:13px;color:#636363;font-weight:bold;transform:scaleX(1.120)">Sprzedaży [F2]</div>
<div class="t" style="left:285.0px;top:255.3px;font-size:13px;color:#636363;font-weight:bold;transform:scaleX(1.075)">Zakupu</div>
<div class="t" style="left:285.0px;top:295.3px;font-size:13px;color:#636363;font-weight:bold;transform:scaleX(1.103)">Zamówienie</div>
<div class="t" style="left:285.0px;top:335.3px;font-size:13px;color:#636363;font-weight:bold;transform:scaleX(1.133)">Nowa Faktura [Ctrl + F2]</div>
<div class="t" style="left:285.0px;top:436.8px;font-size:13px;color:#636363;font-weight:bold;transform:scaleX(1.113)">Lista dokumentów [F5]</div>
<div class="t" style="left:285.0px;top:476.8px;font-size:13px;color:#636363;font-weight:bold;transform:scaleX(1.103)">Wyszukaj dokument</div>
<div class="t" style="left:285.0px;top:516.8px;font-size:13px;color:#636363;font-weight:bold;transform:scaleX(1.117)">Cennik [F4]</div>
<div class="t" style="left:285.0px;top:556.8px;font-size:13px;color:#636363;font-weight:bold;transform:scaleX(1.138)">Lista firm [F3]</div>
<div class="t" style="left:285.0px;top:596.8px;font-size:13px;color:#636363;font-weight:bold;transform:scaleX(1.124)">Raport kasowy [F11]</div>
<div class="t" style="left:663.0px;top:556.6px;font-size:13px;color:#636363;font-weight:bold;transform:scaleX(1.111)">Kopia zapasowa [Ctrl + B]</div>
<div class="t" style="left:823.6px;top:516.8px;font-size:13px;color:#636363;font-weight:bold;transform:scaleX(1.471)">I]</div>
<div class="t" style="left:1035.5px;top:179.1px;font-size:16.3px;color:#1a1a1a;transform:scaleX(1.054)">Ważne</div>
<div class="t" style="left:1149.2px;top:179.1px;font-size:16.3px;color:#fff;transform:scaleX(1.104)">Aktualności</div>
<div class="t" style="left:1024.3px;top:242.2px;font-size:12px;color:#666;font-weight:bold;transform:scaleX(1.219)">Witaj w programie Faktura VAT 2023</div>
<div class="t" style="left:1024.3px;top:270.2px;font-size:12px;color:#666;font-weight:bold;transform:scaleX(1.111)">PRO</div>
<div class="t" style="left:1024.3px;top:299.2px;font-size:12px;color:#666;font-weight:bold;transform:scaleX(1.218)">Dzisiaj jest 09 listopad 2022 .</div>
<div class="t" style="left:1024.3px;top:328.2px;font-size:12px;color:#666;font-weight:bold;transform:scaleX(1.199)">Ostatnia archiwizacja:</div>
<div class="t" style="left:1181.5px;top:328.2px;font-size:12px;color:#222;font-weight:bold;text-decoration:underline;transform:scaleX(1.318)">02-03-2007</div>
<div class="t" style="left:1024.1px;top:377.6px;font-size:12px;color:#111;font-weight:bold;transform:scaleX(1.099)">SPRZEDAŻ</div>
<div class="t" style="left:1024.3px;top:409.5px;font-size:12px;color:#666;font-weight:bold;transform:scaleX(1.203)">Miesiąc listopad netto 0,00 zł , brutto</div>
<div class="t" style="left:1024.3px;top:437.5px;font-size:12px;color:#666;font-weight:bold;transform:scaleX(1.282)">0,00 zł</div>
<div class="t" style="left:1024.3px;top:466.5px;font-size:12px;color:#666;font-weight:bold;transform:scaleX(1.199)">W poprzednim miesiącu netto: 0,00 zł ,</div>
<div class="t" style="left:1024.3px;top:494.5px;font-size:12px;color:#666;font-weight:bold;transform:scaleX(1.248)">brutto 0,00 zł</div>
<div class="t" style="left:1024.3px;top:523.5px;font-size:12px;color:#666;font-weight:bold;transform:scaleX(1.161)">Największa w BRAK RAPORTU brutto</div>
<div class="t" style="left:1024.3px;top:551.5px;font-size:12px;color:#666;font-weight:bold;transform:scaleX(1.282)">0,00 zł</div>
<div class="t" style="left:996.9px;top:689.7px;font-size:12.5px;color:#f2f2f2;transform:scaleX(1.010)">Copyright 2022 by RAFSOFT.NET. Wszystkie prawa zastrzeżone.</div>
<div class="t" style="left:508.8px;top:712.4px;font-size:12.5px;color:#f4f4f4;transform:scaleX(0.925)">2022-11-09</div>
<div class="t" style="left:577.8px;top:712.4px;font-size:12.5px;color:#f4f4f4;transform:scaleX(0.873)">RAZEM NETTO: 0,00 PLN</div>
<div class="t" style="left:973.9px;top:712.4px;font-size:12.5px;color:#f4f4f4;transform:scaleX(0.869)">RAZEM BRUTTO: 0,00 PLN</div>
<div class="t" style="left:1024.6px;top:599.4px;font-size:12px;color:#111;font-weight:bold;transform:scaleX(1.128)">NALEŻNOŚCI</div>
<div class="a" style="left:1020px;top:607px;width:310px;height:16px;background:#fff"></div><div class="a" style="left:542px;top:171px;width:281.5px;height:385px;background:#f0f0f0;border:1px solid #cdcdcd;box-shadow:1px 2px 9px rgba(0,0,0,.30)"></div><div class="a" style="left:543px;top:172px;width:279.5px;height:24px;background:#fff"></div><div class="inp" style="left:615px;top:204px;width:65px"></div><div class="inp" style="left:615px;top:228px;width:65px"></div><div class="inp" style="left:615px;top:252px;width:65px"></div><div class="inp" style="left:615px;top:276px;width:65px"></div><div class="inp" style="left:615px;top:300px;width:201px"></div><div class="inp" style="left:551px;top:372px;width:33px"></div><div class="inp" style="left:599px;top:372px;width:65px"></div><div class="inp" style="left:671px;top:372px;width:65px"></div><div class="inp" style="left:743px;top:372px;width:73px"></div><div class="inp" style="left:551px;top:396px;width:33px"></div><div class="inp" style="left:599px;top:396px;width:65px"></div><div class="inp" style="left:671px;top:396px;width:65px"></div><div class="inp" style="left:743px;top:396px;width:73px"></div><div class="inp" style="left:551px;top:420px;width:33px"></div><div class="inp" style="left:599px;top:420px;width:65px"></div><div class="inp" style="left:671px;top:420px;width:65px"></div><div class="inp" style="left:743px;top:420px;width:73px"></div><div class="inp" style="left:551px;top:444px;width:33px"></div><div class="inp" style="left:599px;top:444px;width:65px"></div><div class="inp" style="left:671px;top:444px;width:65px"></div><div class="inp" style="left:743px;top:444px;width:73px"></div><div class="inp" style="left:551px;top:468px;width:33px"></div><div class="inp" style="left:599px;top:468px;width:65px"></div><div class="inp" style="left:671px;top:468px;width:65px"></div><div class="inp" style="left:743px;top:468px;width:73px"></div><div class="btn" style="left:551px;width:65px"></div><div class="btn" style="left:751px;width:65px"></div>
<svg class="ov" viewBox="0 0 1366 727"><rect x="549.400" y="179.400" width="8.200" height="10.400" rx="1.300" fill="#fff" stroke="#111" stroke-width="1.250"/><path d="M549.400,180.600 v-2 a2.300,2.300 0 0 1 2.300,-2.300 h6.400 a2.500,2.500 0 0 1 2.500,2.500 v3.200 h-3 v-1.400z" fill="#fff" stroke="#111" stroke-width="1.250" stroke-linejoin="round"/><path d="M549.400,183.200 h1.500 M549.400,185.400 h1.500 M549.400,187.600 h1.500 M556.100,183.200 h1.500 M556.100,185.400 h1.500 M556.100,187.600 h1.500 M555.800,176.300 a2.300,2.300 0 0 1 1.800,2.300 v2" stroke="#111" stroke-width="0.9" fill="none"/><path d="M803.4,178 l9.4,9.6 M812.8,178 l-9.4,9.6" stroke="#8f8f8f" stroke-width="1.1"/><rect x="761.5" y="528.5" width="8.5" height="6" fill="#fdfdfd" stroke="#9a9a9a" stroke-width="0.8"/><rect x="758" y="533.5" width="15.5" height="6" rx="1" fill="#8d9298" stroke="#6a6e73" stroke-width="0.7"/><rect x="759" y="536.6" width="13.5" height="1.4" fill="#5a5e63"/><rect x="761.5" y="538" width="8.5" height="4.5" fill="#eef3ff" stroke="#7b86c9" stroke-width="0.8"/></svg>
<div class="t" style="left:566.9px;top:177.4px;font-size:12.5px;color:#9c9c9c;transform:scaleX(0.982)">Dowód wpłaty</div>
<div class="t" style="left:549.5px;top:205.7px;font-size:11.5px;color:#1a1a1a;transform:scaleX(1.033)">D.W. nr:</div>
<div class="t" style="left:549.5px;top:229.7px;font-size:11.5px;color:#1a1a1a;transform:scaleX(0.890)">Nr w PKPiR:</div>
<div class="t" style="left:549.5px;top:253.7px;font-size:11.5px;color:#1a1a1a;transform:scaleX(1.007)">Data:</div>
<div class="t" style="left:549.5px;top:277.7px;font-size:11.5px;color:#1a1a1a;transform:scaleX(0.939)">Nr w ESVAT:</div>
<div class="t" style="left:549.5px;top:301.7px;font-size:11.5px;color:#1a1a1a;transform:scaleX(1.025)">Tekst:</div>
<div class="t" style="left:623.3px;top:208.9px;font-size:11.5px;color:#1a1a1a;transform:scaleX(0.966)">1/2022</div>
<div class="t" style="left:621.9px;top:256.2px;font-size:11.5px;color:#1a1a1a;transform:scaleX(1.016)">09.11.202</div>
<div class="t" style="left:550.6px;top:357.8px;font-size:11.5px;color:#1a1a1a;font-weight:bold;transform:scaleX(1.120)">VAT%</div>
<div class="t" style="left:598.5px;top:357.8px;font-size:11.5px;color:#1a1a1a;font-weight:bold;transform:scaleX(1.075)">Netto</div>
<div class="t" style="left:670.4px;top:357.8px;font-size:11.5px;color:#1a1a1a;font-weight:bold;transform:scaleX(1.052)">VAT</div>
<div class="t" style="left:758.8px;top:357.8px;font-size:11.5px;color:#1a1a1a;font-weight:bold;transform:scaleX(1.058)">Brutto</div>
<div class="t" style="left:550.6px;top:501.9px;font-size:11.5px;color:#1a1a1a;font-weight:bold;transform:scaleX(1.061)">Razem:</div>
<div class="t" style="left:564.1px;top:531.4px;font-size:11.5px;color:#1a1a1a;transform:scaleX(0.921)"><u>Z</u>amknij</div>
<div class="t" style="left:775.8px;top:531.4px;font-size:11.5px;color:#1a1a1a;transform:scaleX(0.959)"><u>D</u>rukuj</div>
</div></body></html>
